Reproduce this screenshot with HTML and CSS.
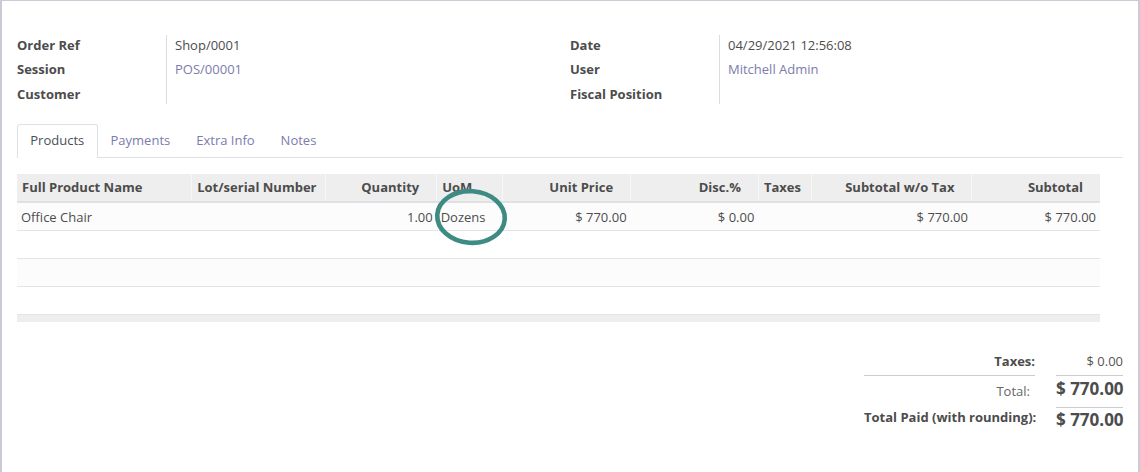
FILE: index.html
```html
<!DOCTYPE html>
<html lang="en">
<head>
<meta charset="utf-8">
<title>Shop/0001</title>
<link rel="stylesheet" href="styles.css">
</head>
<body>
<div class="sheet">
  <div class="groups">
    <div class="group">
      <div class="labels">
        <div class="row lbl">Order Ref</div>
        <div class="row lbl">Session</div>
        <div class="row lbl">Customer</div>
      </div>
      <div class="values">
        <div class="values-inner">
          <div class="row">Shop/0001</div>
          <div class="row link">POS/00001</div>
          <div class="row"></div>
        </div>
      </div>
    </div>
    <div class="group">
      <div class="labels">
        <div class="row lbl">Date</div>
        <div class="row lbl">User</div>
        <div class="row lbl">Fiscal Position</div>
      </div>
      <div class="values">
        <div class="values-inner">
          <div class="row">04/29/2021 12:56:08</div>
          <div class="row link">Mitchell Admin</div>
          <div class="row"></div>
        </div>
      </div>
    </div>
  </div>

  <div class="tabs">
    <div class="tab active">Products</div>
    <div class="tab">Payments</div>
    <div class="tab">Extra Info</div>
    <div class="tab">Notes</div>
  </div>

  <table class="lines">
    <colgroup>
      <col class="c1"><col class="c2"><col class="c3"><col class="c4"><col class="c5"><col class="c6"><col class="c7"><col class="c8"><col class="c9">
    </colgroup>
    <thead>
      <tr>
        <th>Full Product Name</th>
        <th>Lot/serial Number</th>
        <th class="num">Quantity</th>
        <th>UoM</th>
        <th class="num">Unit Price</th>
        <th class="num">Disc.%</th>
        <th>Taxes</th>
        <th class="num">Subtotal w/o Tax</th>
        <th class="num">Subtotal</th>
      </tr>
    </thead>
    <tbody>
      <tr class="odd filled">
        <td>Office Chair</td>
        <td></td>
        <td class="num">1.00</td>
        <td>Dozens</td>
        <td class="num">$&nbsp;770.00</td>
        <td class="num">$&nbsp;0.00</td>
        <td></td>
        <td class="num">$&nbsp;770.00</td>
        <td class="num">$&nbsp;770.00</td>
      </tr>
      <tr><td></td><td></td><td></td><td></td><td></td><td></td><td></td><td></td><td></td></tr>
      <tr class="odd"><td></td><td></td><td></td><td></td><td></td><td></td><td></td><td></td><td></td></tr>
      <tr><td></td><td></td><td></td><td></td><td></td><td></td><td></td><td></td><td></td></tr>
    </tbody>
    <tfoot>
      <tr><td colspan="9"></td></tr>
    </tfoot>
  </table>

  <div class="totals">
    <div class="t-lbl t1 bold">Taxes:</div>
    <div class="t-val t1">$&nbsp;0.00</div>
    <div class="t-lbl t2 light">Total:</div>
    <div class="t-val t2 big sep">$&nbsp;770.00</div>
    <div class="t-lbl t3 bold">Total Paid (with rounding):</div>
    <div class="t-val t3 big">$&nbsp;770.00</div>
  </div>

  <svg class="mark" width="84" height="66" viewBox="0 0 84 66" aria-hidden="true">
    <ellipse cx="42" cy="32" rx="33.8" ry="25.8" fill="none" stroke="#3d8b83" stroke-width="4.6" transform="rotate(4 42 32)"/>
  </svg>
</div>
</body>
</html>
```

FILE: styles.css
```css
html, body {
  margin: 0;
  padding: 0;
  background: #ffffff;
}

body {
  font-family: "Open Sans", "DejaVu Sans", sans-serif;
  font-size: 13px;
  color: #4c4c4c;
}

.sheet {
  position: relative;
  box-sizing: border-box;
  width: 1140px;
  height: 472px;
  border-top: 1px solid #cdcad8;
  border-left: 2px solid #cdcad8;
  border-right: 2px solid #cdcad8;
  padding: 31.7px 15px 0 15px;
}

/* ---------- header groups ---------- */
.groups {
  display: flex;
}

.group {
  display: flex;
  width: 553px;
}

.labels {
  width: 149px;
  display: flex;
  flex-direction: column;
}

.row {
  height: 24.6px;
  line-height: 24.6px;
  white-space: nowrap;
}

.lbl {
  font-weight: 700;
  color: #4c4c4c;
}

.values {
  display: flex;
  flex-direction: column;
  border-left: 1px solid #dcdcdc;
  padding-left: 8px;
  margin: 2.3px 0 2.8px 0;
}

.values-inner {
  display: flex;
  flex-direction: column;
  margin: -2.3px 0 -2.8px 0;
}

.link {
  color: #7c7bad;
}

/* ---------- tabs ---------- */
.tabs {
  display: flex;
  margin-top: 17.8px;
  border-bottom: 1px solid #dee2e6;
}

.tab {
  height: 31.7px;
  line-height: 31.7px;
  padding: 0 12px;
  border: 1px solid transparent;
  border-bottom: none;
  border-radius: 3px 3px 0 0;
  color: #7c7bad;
  margin-bottom: -1px;
}

.tab.active {
  color: #495057;
  background: #ffffff;
  border-color: #dee2e6;
  padding: 0 12.3px 1px 12.3px;
}

/* ---------- lines table ---------- */
.lines {
  margin-top: 16.3px;
  width: 1083px;
  table-layout: fixed;
  border-collapse: collapse;
  border-spacing: 0;
}

.c1 { width: 174.7px; }
.c2 { width: 134px; }
.c3 { width: 111px; }
.c4 { width: 65.6px; }
.c5 { width: 128.3px; }
.c6 { width: 127.8px; }
.c7 { width: 53.6px; }
.c8 { width: 160px; }
.c9 { width: 128px; }

.lines th {
  background: #eeeeee;
  font-weight: 700;
  text-align: left;
  height: 27px;
  line-height: 27px;
  padding: 0 5px;
  border-left: 1px solid #f7f7f7;
  border-bottom: 2px solid #dfe1e5;
  white-space: nowrap;
  overflow: hidden;
}

.lines th:first-child {
  border-left: none;
}

.lines th.num {
  text-align: right;
  padding-right: 17px;
}

.lines td {
  height: 27px;
  line-height: 27px;
  padding: 0 4px;
  border-bottom: 1px solid #e2e4e8;
  white-space: nowrap;
  overflow: hidden;
}

.lines tr.filled td {
  line-height: 25px;
  vertical-align: bottom;
}

.lines td.num {
  text-align: right;
}

.lines tr.odd td {
  background: #fcfcfc;
}

.lines tfoot td {
  height: 7px;
  line-height: 7px;
  padding: 0;
  background: #eeeeee;
  border-bottom: none;
}

/* ---------- totals ---------- */
.totals {
  display: grid;
  grid-template-columns: 171px 67px;
  column-gap: 21px;
  width: 259px;
  margin: 27.7px 0 0 auto;
}

.t-lbl {
  text-align: right;
  white-space: nowrap;
}

.t-val {
  text-align: right;
  white-space: nowrap;
}

.bold {
  font-weight: 700;
}

.light {
  color: #666666;
  padding-right: 5px;
}

.t1 {
  line-height: 22px;
  padding-bottom: 3.3px;
  border-bottom: 1px solid #cccccc;
}

.t1.t-val {
  color: #555555;
}

.t2.t-lbl {
  line-height: 31px;
}

.t2.t-val {
  line-height: 26px;
  padding-bottom: 5px;
}

.t3.t-lbl {
  line-height: 18px;
  align-self: start;
}

.t3.t-val {
  line-height: 24px;
}

.big {
  font-size: 17px;
  font-weight: 700;
  color: #4c4c4c;
}

.sep {
  border-bottom: 1px solid #cccccc;
}

/* annotation circle lying over the UoM cell */
.mark {
  position: absolute;
  left: 427px;
  top: 184px;
  pointer-events: none;
}
```
